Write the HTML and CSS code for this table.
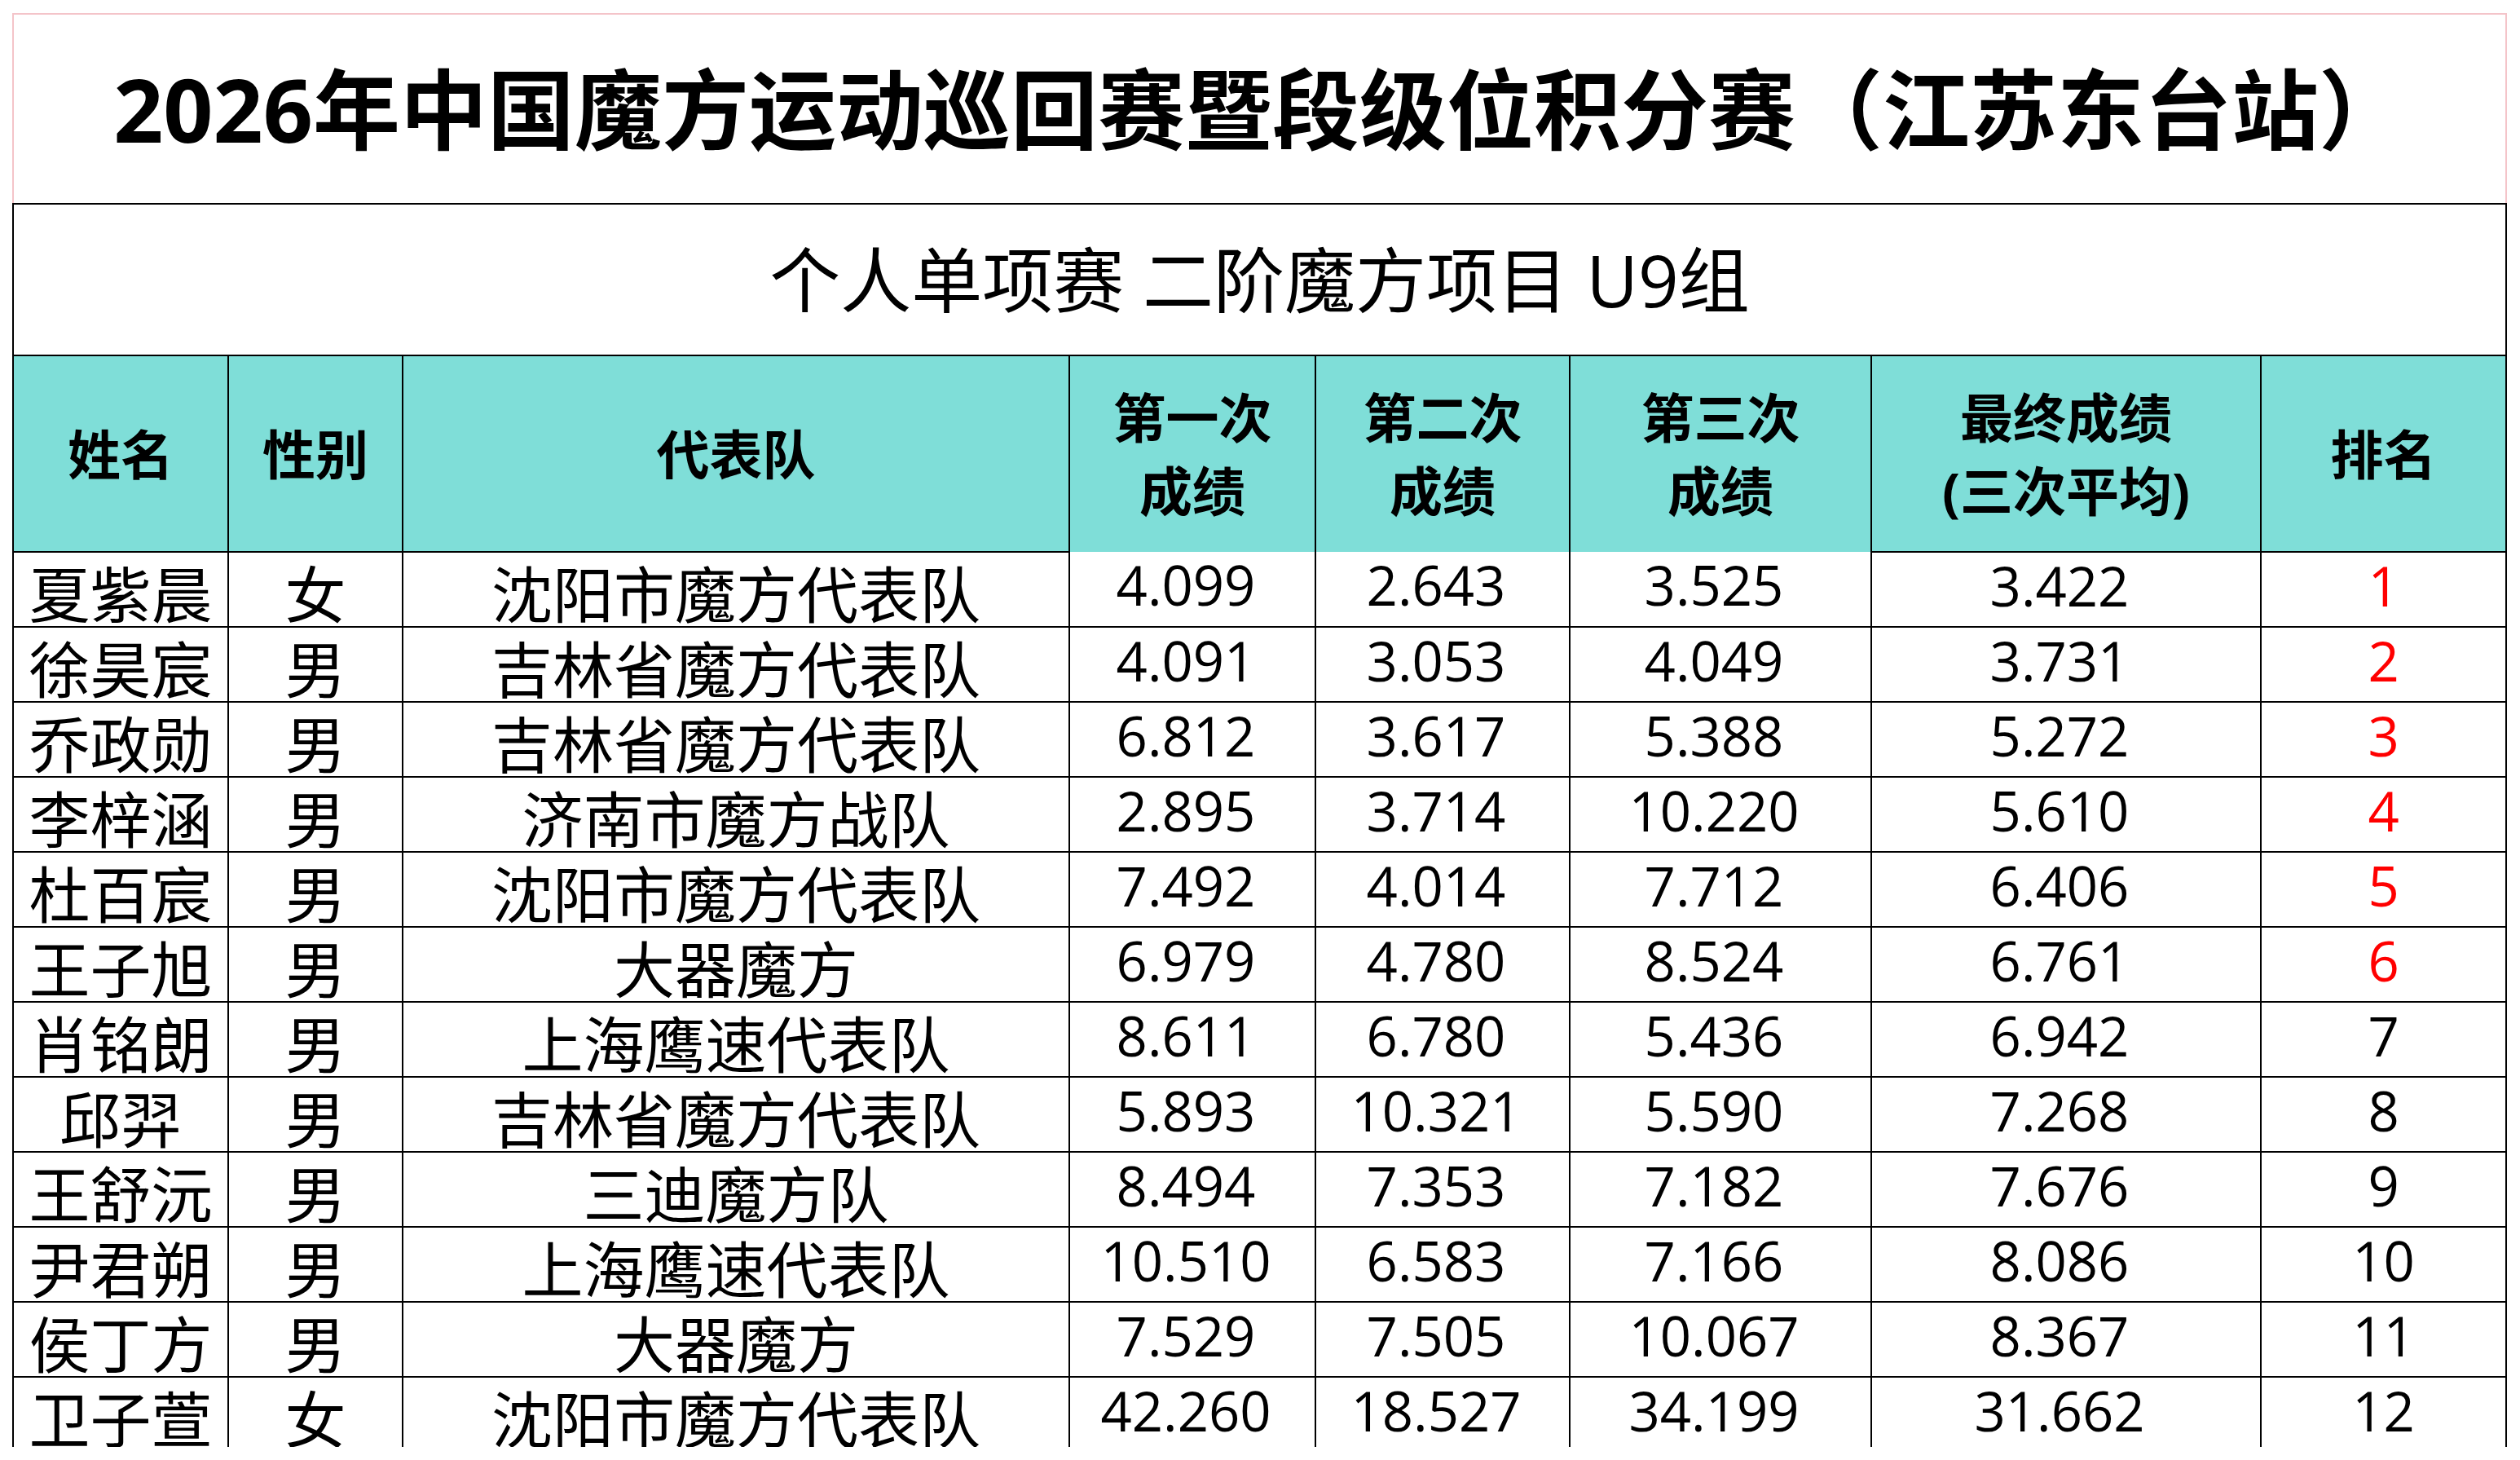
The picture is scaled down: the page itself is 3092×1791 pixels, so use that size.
FILE: index.html
```html
<!DOCTYPE html>
<html lang="zh-CN">
<head>
<meta charset="utf-8">
<title>2026年中国魔方运动巡回赛暨段级位积分赛（江苏东台站）</title>
<link rel="stylesheet" href="styles.css">
</head>
<body>
<div class="sheet">
<table class="grid">
  <colgroup>
    <col class="w-name"><col class="w-sex"><col class="w-team"><col class="w-r1"><col class="w-r2"><col class="w-r3"><col class="w-avg"><col class="w-rank">
  </colgroup>
  <tr class="row-title"><td colspan="8" class="title">2026年中国魔方运动巡回赛暨段级位积分赛（江苏东台站）</td></tr>
  <tr class="row-sub"><td colspan="8" class="sub">个人单项赛 二阶魔方项目 U9组</td></tr>
  <tr class="row-head">
    <th>姓名</th><th>性别</th><th>代表队</th>
    <th class="open">第一次<br>成绩</th><th class="open">第二次<br>成绩</th><th class="open">第三次<br>成绩</th>
    <th>最终成绩<br>(三次平均)</th><th>排名</th>
  </tr>
  <tr><td class="cjk">夏紫晨</td><td class="cjk">女</td><td class="cjk">沈阳市魔方代表队</td><td class="num">4.099</td><td class="num">2.643</td><td class="num">3.525</td><td class="num">3.422</td><td class="rank top">1</td></tr>
  <tr><td class="cjk">徐昊宸</td><td class="cjk">男</td><td class="cjk">吉林省魔方代表队</td><td class="num">4.091</td><td class="num">3.053</td><td class="num">4.049</td><td class="num">3.731</td><td class="rank top">2</td></tr>
  <tr><td class="cjk">乔政勋</td><td class="cjk">男</td><td class="cjk">吉林省魔方代表队</td><td class="num">6.812</td><td class="num">3.617</td><td class="num">5.388</td><td class="num">5.272</td><td class="rank top">3</td></tr>
  <tr><td class="cjk">李梓涵</td><td class="cjk">男</td><td class="cjk">济南市魔方战队</td><td class="num">2.895</td><td class="num">3.714</td><td class="num">10.220</td><td class="num">5.610</td><td class="rank top">4</td></tr>
  <tr><td class="cjk">杜百宸</td><td class="cjk">男</td><td class="cjk">沈阳市魔方代表队</td><td class="num">7.492</td><td class="num">4.014</td><td class="num">7.712</td><td class="num">6.406</td><td class="rank top">5</td></tr>
  <tr><td class="cjk">王子旭</td><td class="cjk">男</td><td class="cjk">大器魔方</td><td class="num">6.979</td><td class="num">4.780</td><td class="num">8.524</td><td class="num">6.761</td><td class="rank top">6</td></tr>
  <tr><td class="cjk">肖铭朗</td><td class="cjk">男</td><td class="cjk">上海鹰速代表队</td><td class="num">8.611</td><td class="num">6.780</td><td class="num">5.436</td><td class="num">6.942</td><td class="rank">7</td></tr>
  <tr><td class="cjk">邱羿</td><td class="cjk">男</td><td class="cjk">吉林省魔方代表队</td><td class="num">5.893</td><td class="num">10.321</td><td class="num">5.590</td><td class="num">7.268</td><td class="rank">8</td></tr>
  <tr><td class="cjk">王舒沅</td><td class="cjk">男</td><td class="cjk">三迪魔方队</td><td class="num">8.494</td><td class="num">7.353</td><td class="num">7.182</td><td class="num">7.676</td><td class="rank">9</td></tr>
  <tr><td class="cjk">尹君朔</td><td class="cjk">男</td><td class="cjk">上海鹰速代表队</td><td class="num">10.510</td><td class="num">6.583</td><td class="num">7.166</td><td class="num">8.086</td><td class="rank">10</td></tr>
  <tr><td class="cjk">侯丁方</td><td class="cjk">男</td><td class="cjk">大器魔方</td><td class="num">7.529</td><td class="num">7.505</td><td class="num">10.067</td><td class="num">8.367</td><td class="rank">11</td></tr>
  <tr><td class="cjk">卫子萱</td><td class="cjk">女</td><td class="cjk">沈阳市魔方代表队</td><td class="num">42.260</td><td class="num">18.527</td><td class="num">34.199</td><td class="num">31.662</td><td class="rank">12</td></tr>
</table>
</div>
</body>
</html>
```

FILE: styles.css
```css
html, body {
  margin: 0;
  padding: 0;
  background: #ffffff;
}

body {
  font-family: "Open Sans", "Noto Sans CJK SC", sans-serif;
  color: #000000;
}

.sheet {
  margin: 16px 0 0 15px;
  width: 3061px;
  height: 1759px;
  overflow: hidden;
}

.grid {
  border-collapse: collapse;
  table-layout: fixed;
  width: 3061px;
}

.w-name { width: 264px; }
.w-sex { width: 214px; }
.w-team { width: 818px; }
.w-r1 { width: 302px; }
.w-r2 { width: 312px; }
.w-r3 { width: 370px; }
.w-avg { width: 478px; }
.w-rank { width: 301px; }

.grid td,
.grid th {
  border: 2px solid #000000;
  padding: 0;
  text-align: center;
  vertical-align: middle;
  white-space: nowrap;
}

.grid tr { height: 92px; }
.grid tr.row-title { height: 233px; }
.grid tr.row-sub { height: 186px; }
.grid tr.row-head { height: 241px; }

.grid td.title {
  border-top: 2px solid #f4c4c9;
  border-left: 2px solid #f4c4c9;
  border-right: 2px solid #f4c4c9;
  font-weight: 700;
  font-size: 107px;
  line-height: 1;
  padding-right: 0;
}

.grid td.sub {
  font-weight: 400;
  font-size: 87px;
  line-height: 1;
}

.row-head th {
  background: #7fded8;
  font-weight: 700;
  font-size: 65px;
  line-height: 90px;
}

.row-head th.open {
  border-bottom: hidden;
}

.grid td.cjk {
  font-family: "Noto Sans CJK SC", sans-serif;
  font-weight: 400;
  font-size: 75px;
  line-height: 1;
  padding-top: 4px;
}

.grid td.num,
.grid td.rank {
  font-weight: 400;
  font-size: 67px;
  line-height: 1;
  padding-bottom: 10px;
}

.grid td.num {
  padding-right: 16px;
}

.grid td.top {
  color: #ff0000;
}
```
